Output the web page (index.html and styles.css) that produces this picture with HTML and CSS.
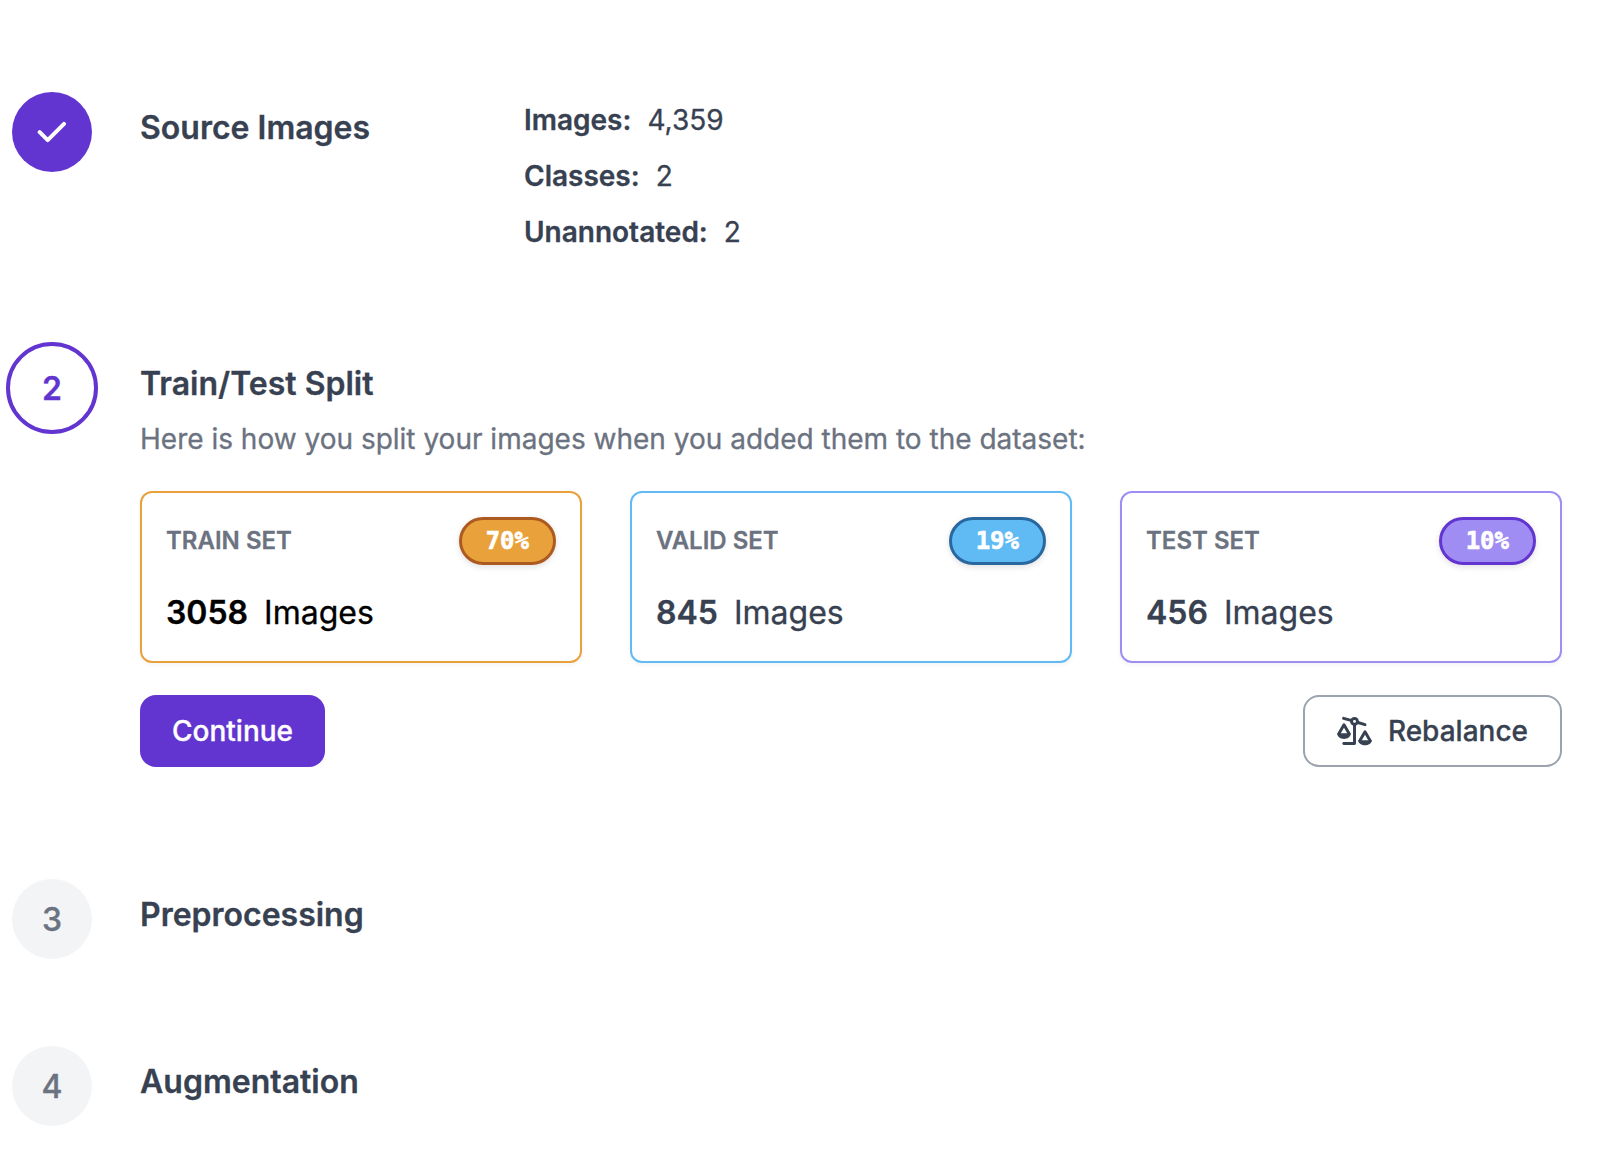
FILE: index.html
```html
<!DOCTYPE html>
<html lang="en">
<head>
<meta charset="utf-8">
<title>Generate Version</title>
<link rel="stylesheet" href="styles.css">
</head>
<body>
<main class="steps">
  <section class="step step-source">
    <div class="marker marker-done">
      <svg class="check" viewBox="0 0 30 22" fill="none" stroke="#fff" stroke-width="4" stroke-linecap="round" stroke-linejoin="round"><path d="M2.7 11.2 10.7 19.1 27 2.8"/></svg>
    </div>
    <div class="body source-body">
      <h2 class="title">Source Images</h2>
      <dl class="facts">
        <div class="fact"><dt>Images:</dt><dd>4,359</dd></div>
        <div class="fact"><dt>Classes:</dt><dd>2</dd></div>
        <div class="fact"><dt>Unannotated:</dt><dd>2</dd></div>
      </dl>
    </div>
  </section>

  <section class="step step-split">
    <div class="marker marker-active">2</div>
    <div class="body">
      <h2 class="title">Train/Test Split</h2>
      <p class="description">Here is how you split your images when you added them to the dataset:</p>
      <div class="cards">
        <article class="card card-train">
          <div class="card-head"><span class="card-label">TRAIN SET</span><span class="badge">70%</span></div>
          <div class="count"><strong>3058</strong><span>Images</span></div>
        </article>
        <article class="card card-valid">
          <div class="card-head"><span class="card-label">VALID SET</span><span class="badge">19%</span></div>
          <div class="count"><strong>845</strong><span>Images</span></div>
        </article>
        <article class="card card-test">
          <div class="card-head"><span class="card-label">TEST SET</span><span class="badge">10%</span></div>
          <div class="count"><strong>456</strong><span>Images</span></div>
        </article>
      </div>
      <div class="actions">
        <button class="button button-primary">Continue</button>
        <button class="button button-outline">
          <svg class="scale" viewBox="0 0 640 512" fill="none" stroke="currentColor" stroke-width="54" stroke-linecap="round" stroke-linejoin="round"><path d="M120 24 258 63M382 101 512 141M320 140V486H124"/><circle cx="320" cy="80" r="54"/><path d="M33 308 128 143 223 308"/><path d="M417 436 512 271 607 436"/><path class="pan" d="M4 296H252C252 366 188 400 128 400S4 366 4 296Z"/><path class="pan" d="M388 424H636C636 482 572 516 512 516S388 482 388 424Z"/></svg>
          Rebalance
        </button>
      </div>
    </div>
  </section>

  <section class="step step-pre">
    <div class="marker">3</div>
    <div class="body"><h2 class="title">Preprocessing</h2></div>
  </section>

  <section class="step step-aug">
    <div class="marker">4</div>
    <div class="body"><h2 class="title">Augmentation</h2></div>
  </section>
</main>
</body>
</html>
```
FILE: styles.css
```css
* { box-sizing: border-box; }

body {
  margin: 0;
  background: #fff;
  color: #374151;
  font-family: Inter, "Liberation Sans", sans-serif;
  font-size: 28px;
  line-height: 40px;
  -webkit-text-stroke: .3px currentColor;
}

h2, p, dl, dd { margin: 0; }

.steps { padding: 92px 42px 0 12px; }

.step {
  display: flex;
  align-items: flex-start;
  gap: 48px;
}
.step-source { height: 256px; }
.step-split { height: 531px; }
.step-pre { height: 167px; }

.marker {
  display: flex;
  flex: none;
  align-items: center;
  justify-content: center;
  width: 80px;
  height: 80px;
  padding-top: 2px;
  border-radius: 50%;
  background: #f3f4f6;
  color: #6b7280;
  font-size: 32px;
  font-weight: 500;
}
.marker-done { padding-top: 0; background: #6335d0; }
.marker-active {
  width: 92px;
  height: 92px;
  margin: -6px;
  border: 4px solid #6335d0;
  background: #fff;
  color: #6335d0;
  font-weight: 600;
}
.check { width: 30px; height: 22px; }

.body { flex: 1; padding-top: 16px; }
.source-body { display: flex; }

.title {
  width: 384px;
  font-size: 32px;
  font-weight: 600;
  line-height: 40px;
}

.facts {
  display: flex;
  flex-direction: column;
  gap: 16px;
  margin-top: -8px;
}
.fact { display: flex; gap: 16px; }
.fact dt { font-weight: 600; }

.description { margin-top: 15px; color: #6b7280; }

.cards {
  display: grid;
  grid-template-columns: repeat(3, 1fr);
  gap: 48px;
  margin-top: 32px;
}
.card {
  height: 172px;
  padding: 24px;
  border: 2px solid var(--line);
  border-radius: 12px;
  box-shadow: 0 2px 4px rgba(0, 0, 0, .05);
}
.card-train { --line: #e9a23b; --edge: #ad5a21; color: #000; }
.card-valid { --line: #60baf3; --edge: #29689f; }
.card-test { --line: #a08df3; --edge: #6335d0; }

.card-head {
  display: flex;
  align-items: center;
  justify-content: space-between;
}
.card-label {
  color: #6b7280;
  font-size: 24px;
  font-weight: 600;
  line-height: 32px;
}
.badge {
  height: 48px;
  padding: 0 24px;
  border: 3px solid var(--edge);
  border-radius: 24px;
  background: var(--line);
  color: #fff;
  font: 700 24px/42px "DejaVu Sans Mono", monospace;
  -webkit-text-stroke-width: .6px;
  box-shadow: 0 2px 6px rgba(0, 0, 0, .12);
}
.count {
  display: flex;
  gap: 16px;
  margin-top: 28px;
  font-size: 32px;
}
.count strong { font-weight: 600; }

.actions {
  display: flex;
  justify-content: space-between;
  margin-top: 32px;
}
.button {
  display: flex;
  align-items: center;
  height: 72px;
  padding: 0 32px;
  border: 0;
  border-radius: 16px;
  background: #fff;
  color: #374151;
  font: 500 28px/40px Inter, "Liberation Sans", sans-serif;
}
.button-primary { background: #6335d0; color: #fff; }
.button-outline { gap: 16px; border: 2px solid #9ca3af; }
.scale { width: 35px; height: 28px; overflow: visible; }
.pan { fill: currentColor; stroke: none; }
```
